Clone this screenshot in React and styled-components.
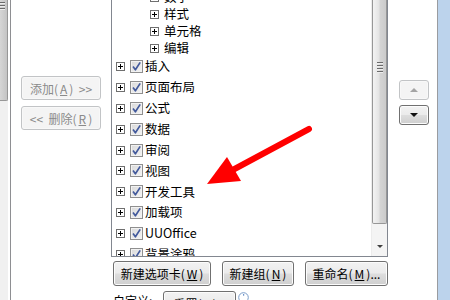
import styled, { createGlobalStyle } from 'styled-components'

const GlobalStyle = createGlobalStyle`
	html, body {
		margin: 0;
		padding: 0;
		overflow: hidden;
		background: #fff;
	}
	* {
		box-sizing: border-box;
	}
`

const Dialog = styled.div`
	position: relative;
	display: flex;
	width: 450px;
	height: 300px;
	overflow: hidden;
	background: #fff;
	font-family: 'Noto Sans CJK SC', 'Noto Sans', sans-serif;
	font-size: 12px;
	color: #000;
`

const SourceList = styled.div`
	flex: none;
	width: 11px;
	height: 100%;
	border-right: 1px solid #8e8f92;
	display: flex;
`
const SourceTrack = styled.div`
	width: 8px;
	height: 100%;
	background: #f0f0f0;
`
const SourceThumb = styled.div`
	height: 101px;
	background: linear-gradient(to right, #d6d6d6, #c4c4c4);
	border-right: 1px solid #979797;
	border-bottom: 1px solid #979797;
	border-radius: 0 0 2px 0;
`
const Grip = styled.div`
	display: flex;
	flex-direction: column;
	gap: 1px;
	padding: ${(p) => p.$top}px 0 0 ${(p) => p.$left}px;
	span {
		display: block;
		width: ${(p) => p.$width}px;
		height: 1px;
		background: #6b6b6b;
		border-bottom: 1px solid #eee;
		box-sizing: content-box;
	}
`

const MiddleColumn = styled.div`
	flex: none;
	width: 100px;
	padding: 76px 0 0 10px;
	display: flex;
	flex-direction: column;
	gap: 6px;
`

const Button = styled.button`
	flex: none;
	display: flex;
	align-items: center;
	justify-content: center;
	gap: 2px;
	width: ${(p) => p.$w}px;
	height: ${(p) => p.$h || 25}px;
	padding: 0;
	font: inherit;
	font-size: 12px;
	color: ${(p) => (p.disabled ? '#8a8a8a' : '#000')};
	border: 1px solid ${(p) => (p.disabled ? '#c2c4c6' : '#707070')};
	border-radius: 3px;
	background: ${(p) =>
		p.disabled
			? '#f4f4f4'
			: 'linear-gradient(to bottom, #f2f2f2 0%, #ebebeb 48%, #dddddd 52%, #cfcfcf 100%)'};
	box-shadow: inset 0 0 0 1px ${(p) => (p.disabled ? '#f8f8f8' : '#fcfcfc')};
	u {
		text-decoration-thickness: 1px;
		text-underline-offset: 1px;
	}
`

const MainColumn = styled.div`
	flex: none;
	width: 277px;
	display: flex;
	flex-direction: column;
`

const ListBox = styled.div`
	flex: none;
	display: flex;
	height: 257px;
	border: 1px solid #828790;
	border-top: none;
	background: #fff;
`

const Tree = styled.div`
	flex: 1;
	overflow: hidden;
	padding-left: 4px;
	display: flex;
	flex-direction: column;
`

const SubRow = styled.div`
	flex: none;
	display: flex;
	align-items: center;
	gap: 5px;
	height: 17px;
	padding: 2px 0 0 34px;
	margin-top: ${(p) => p.$offset || 0}px;
	white-space: nowrap;
`

const TopRow = styled.div`
	flex: none;
	display: flex;
	align-items: center;
	height: 20.9px;
	white-space: nowrap;
`

const Expander = styled.span`
	position: relative;
	flex: none;
	width: 9px;
	height: 9px;
	border: 1px solid #6f6f6f;
	background: #fff;
	&::before,
	&::after {
		content: '';
		position: absolute;
		background: #000;
	}
	&::before {
		left: 1px;
		top: 3px;
		width: 5px;
		height: 1px;
	}
	&::after {
		left: 3px;
		top: 1px;
		width: 1px;
		height: 5px;
	}
`

const CheckBox = styled.span`
	flex: none;
	display: flex;
	align-items: center;
	justify-content: center;
	width: 13px;
	height: 13px;
	margin: 0 2px 0 5px;
	border: 1px solid #8f8f8f;
	background: linear-gradient(135deg, #d9d9d9, #f4f4f4);
	box-shadow: inset 0 0 0 1px #f2f2f2;
`

const Label = styled.span`
	line-height: 1;
	font-size: 12.5px;
`

const VScroll = styled.div`
	flex: none;
	width: 16px;
	display: flex;
	flex-direction: column;
	background: #f4f4f4;
	border-left: 1px solid #ececec;
`
const Thumb = styled.div`
	flex: none;
	display: flex;
	justify-content: center;
	height: 224px;
	background: linear-gradient(to right, #f3f3f3 0%, #e4e4e4 45%, #d4d4d4 55%, #cbcbcb 100%);
	border: 1px solid #979797;
	border-top: none;
	border-radius: 0 0 2px 2px;
`
const ScrollDown = styled.div`
	flex: 1;
	display: flex;
	align-items: flex-end;
	justify-content: center;
	padding-bottom: 8px;
	&::before {
		content: '';
		border-left: 3px solid transparent;
		border-right: 3px solid transparent;
		border-top: 3px solid #404040;
	}
`

const ButtonRow = styled.div`
	flex: none;
	display: flex;
	gap: 11px;
	margin-top: 4px;
	padding-left: 2px;
`

const ResetRow = styled.div`
	flex: none;
	display: flex;
	align-items: flex-start;
	margin-top: 5px;
	padding-left: 2px;
`
const ResetLabel = styled.span`
	width: 50px;
	padding-top: 1px;
`
const Info = styled.span`
	display: flex;
	margin: 1px 0 0 2px;
`

const RightColumn = styled.div`
	flex: none;
	width: 49px;
	padding: 80px 0 0 11px;
	display: flex;
	flex-direction: column;
	gap: 5px;
`
const Arrow = styled.span`
	border-left: 4px solid transparent;
	border-right: 4px solid transparent;
	${(p) =>
		p.$up
			? 'border-bottom: 4px solid #a4a4a4;'
			: 'border-top: 4px solid #111;'}
`

const Strip = styled.div`
	flex: none;
	width: 13px;
	height: 100%;
	border-left: 1px solid #9a9ca0;
	background: #bcd3ec;
`

const Pointer = styled.svg`
	position: absolute;
	left: 0;
	top: 0;
	pointer-events: none;
`

const subItems = ['数字', '样式', '单元格', '编辑']
const topItems = ['插入', '页面布局', '公式', '数据', '审阅', '视图', '开发工具', '加载项', 'UUOffice', '背景涂鸦']

const Check = () => (
	<svg width="11" height="11" viewBox="0 0 11 11">
		<path d="M2 5.6 L4.4 8.8 L9.2 1.4" fill="none" stroke="#435a9c" strokeWidth="1.7" strokeLinejoin="round" />
	</svg>
)

const App = () => {
	return (
		<>
			<GlobalStyle />
			<Dialog>
				<SourceList>
					<SourceTrack>
						<SourceThumb>
							<Grip $top={2} $left={0} $width={5}>
								<span />
								<span />
								<span />
							</Grip>
						</SourceThumb>
					</SourceTrack>
				</SourceList>

				<MiddleColumn>
					<Button disabled $w={80} $h={24}>
						添加(<u>A</u>)&nbsp;&nbsp;&gt;&gt;
					</Button>
					<Button disabled $w={80} $h={24}>
						&lt;&lt;&nbsp;&nbsp;删除(<u>R</u>)
					</Button>
				</MiddleColumn>

				<MainColumn>
					<ListBox>
						<Tree>
							{subItems.map((name, i) => (
								<SubRow key={name} $offset={i === 0 ? -12 : 0}>
									<Expander />
									<Label>{name}</Label>
								</SubRow>
							))}
							{topItems.map((name) => (
								<TopRow key={name}>
									<Expander />
									<CheckBox>
										<Check />
									</CheckBox>
									<Label>{name}</Label>
								</TopRow>
							))}
						</Tree>
						<VScroll>
							<Thumb>
								<Grip $top={62} $left={0} $width={6}>
									<span />
									<span />
									<span />
									<span />
								</Grip>
							</Thumb>
							<ScrollDown />
						</VScroll>
					</ListBox>

					<ButtonRow>
						<Button $w={98}>
							新建选项卡(<u>W</u>)
						</Button>
						<Button $w={72}>
							新建组(<u>N</u>)
						</Button>
						<Button $w={83}>
							重命名(<u>M</u>)...
						</Button>
					</ButtonRow>

					<ResetRow>
						<ResetLabel>自定义:</ResetLabel>
						<Button $w={73}>
							重置(<u>E</u>) ▾
						</Button>
						<Info>
							<svg width="11" height="11" viewBox="0 0 11 11">
								<circle cx="5.5" cy="5.5" r="4.8" fill="#fff" stroke="#7a9cc8" strokeWidth="1" />
								<rect x="5" y="2.3" width="1.2" height="1.2" fill="#2f66b3" />
							</svg>
						</Info>
					</ResetRow>
				</MainColumn>

				<RightColumn>
					<Button disabled $w={30} $h={20}>
						<Arrow $up />
					</Button>
					<Button $w={30} $h={20}>
						<Arrow />
					</Button>
				</RightColumn>

				<Strip />

				<Pointer width="450" height="300" viewBox="0 0 450 300">
					<line x1="309" y1="129" x2="228" y2="172.5" stroke="#ff0000" strokeWidth="6" strokeLinecap="round" />
					<polygon points="207,184 227,157 241,181" fill="#ff0000" />
				</Pointer>
			</Dialog>
		</>
	)
}

export default App
